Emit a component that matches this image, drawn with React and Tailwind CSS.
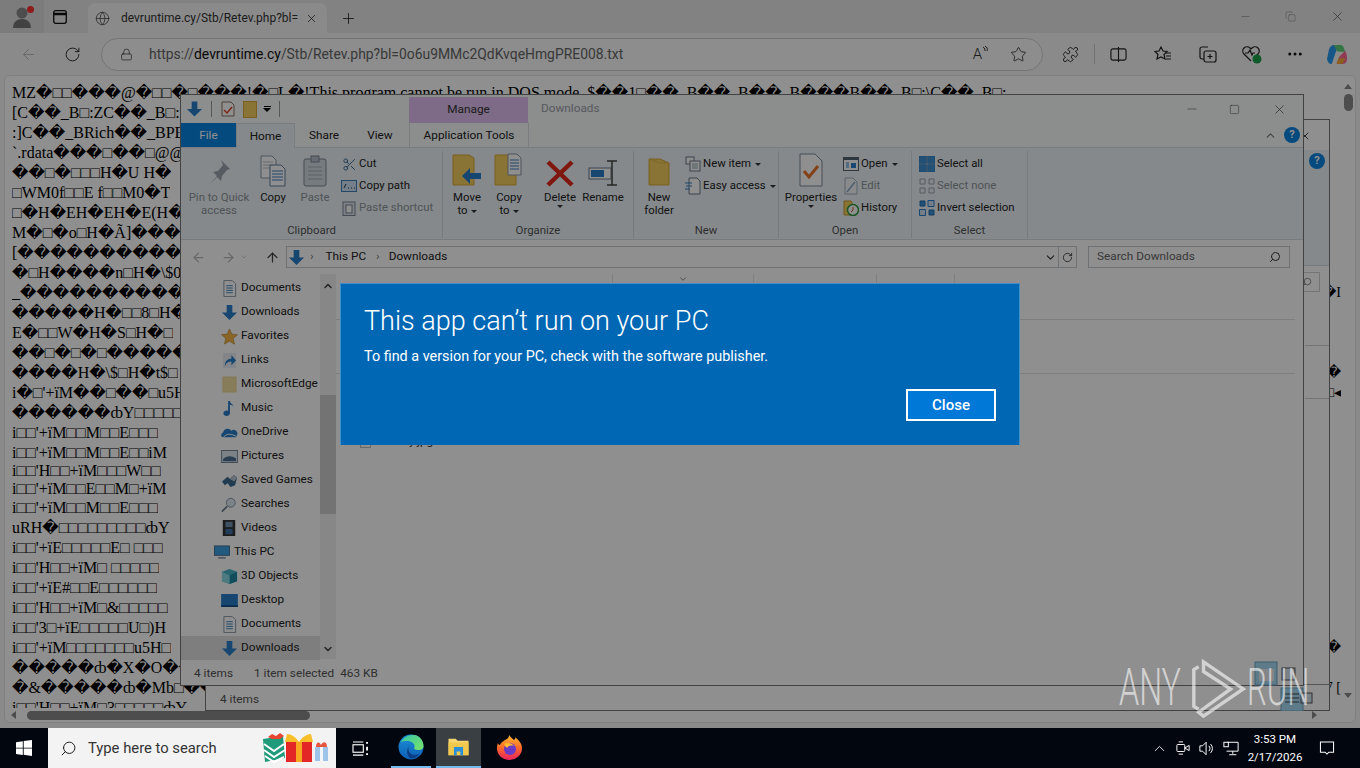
import React from "react";
import { ArrowLeft, ArrowRight, ArrowUp, RotateCw, Lock, Star, Plus, X, Globe, Minus, Square, Ellipsis, ChevronUp, ChevronDown, Search, Copy as CopyI, Puzzle, Scissors } from "lucide-react";

const UI = "font-['Roboto','Noto_Sans',sans-serif]";

const Sq = "\u25A1";
const D = "\uFFFD";
const lines = [
  [`MZ${D}${Sq}${Sq}${D}${D}${D}@${D}${Sq}${Sq}${D}${Sq}${D}${D}${D}!${D}${Sq}L${D}!This program cannot be run in DOS mode. $${D}${D}1${Sq}${D}${D}_B${D}${D}_B${D}${D}_B${D}${D}${D}B${D}${D}_B${Sq}:\\C${D}${D}_B${Sq}:`],
  [`[C${D}${D}_B${Sq}:ZC${D}${D}_B${Sq}:`],
  [`:]C${D}${D}_BRich${D}${D}_BPE`],
  [`\`.rdata${D}${D}${D}${Sq}${D}${D}${Sq}@@`],
  [`${D}${D}${Sq}${D}${Sq}${Sq}${Sq}H${D}U H${D}`],
  [`${Sq}WM0f${Sq}${Sq}E f${Sq}${Sq}M0${D}T`],
  [`${Sq}${D}H${D}EH${D}EH${D}E(H${D}`],
  [`M${D}${Sq}${D}o${Sq}H${D}Ã]${D}${D}${D}`],
  [`[${D}${D}${D}${D}${D}${D}${D}${D}${D}${D}`],
  [`${D}${Sq}H${D}${D}${D}${D}n${Sq}H${D}\\$0`],
  [`_${D}${D}${D}${D}${D}${D}${D}${D}${D}${D}${D}${D}`, `${D}I`],
  [`${D}${D}${D}${D}${D}H${D}${Sq}${Sq}8${Sq}H${D}`],
  [`E${D}${Sq}${Sq}W${D}H${D}S${Sq}H${D}${Sq}`],
  [`${D}${D}${Sq}${D}${Sq}${D}${Sq}${D}${D}${D}${D}${D}`],
  [`${D}${D}${D}${D}H${D}\\$${Sq}H${D}t$${Sq}`, `${D}`],
  [`i${D}${Sq}'+ïM${D}${D}${Sq}${D}${D}${Sq}u5H`, `${Sq}◂`],
  [`${D}${D}${D}${D}${D}${D}ȸY${Sq}${Sq}${Sq}${Sq}${Sq}`],
  [`i${Sq}${Sq}'+ïM${Sq}${Sq}M${Sq}${Sq}E${Sq}${Sq}${Sq}`],
  [`i${Sq}${Sq}'+ïM${Sq}${Sq}M${Sq}${Sq}E${Sq}${Sq}iM`, "", "h-[18px]"],
  [`i${Sq}${Sq}'H${Sq}${Sq}+ïM${Sq}${Sq}${Sq}W${Sq}${Sq}`, "", "h-[18px]"],
  [`i${Sq}${Sq}'+ïM${Sq}${Sq}E${Sq}${Sq}M${Sq}+ïM`, "", "h-[19px]"],
  [`i${Sq}${Sq}'+ïM${Sq}${Sq}M${Sq}${Sq}E${Sq}${Sq}${Sq}`],
  [`uRH${D}${Sq}${Sq}${Sq}${Sq}${Sq}${Sq}${Sq}${Sq}${Sq}ȸY`],
  [`i${Sq}${Sq}'+ïE${Sq}${Sq}${Sq}${Sq}${Sq}E${Sq} ${Sq}${Sq}${Sq}`],
  [`i${Sq}${Sq}'H${Sq}${Sq}+ïM${Sq} ${Sq}${Sq}${Sq}${Sq}${Sq}`],
  [`i${Sq}${Sq}'+ïE#${Sq}${Sq}E${Sq}${Sq}${Sq}${Sq}${Sq}${Sq}`],
  [`i${Sq}${Sq}'H${Sq}${Sq}+ïM${Sq}&${Sq}${Sq}${Sq}${Sq}${Sq}`],
  [`i${Sq}${Sq}'3${Sq}+ïE${Sq}${Sq}${Sq}${Sq}${Sq}U${Sq})H`],
  [`i${Sq}${Sq}'+ïM${Sq}${Sq}${Sq}${Sq}${Sq}${Sq}${Sq}u5H${Sq}`, `${D}`],
  [`${D}${D}${D}${D}${D}ȸ${D}X${D}O${D}${D}`],
  [`${D}&${D}${D}${D}${D}${D}ȸ${D}Mb${Sq}${D}${D}${D}`, "7 ["],
  [`i${Sq}${Sq}'H${Sq}${Sq}+ïM${Sq}3${Sq}${Sq}${Sq}${Sq}${Sq}ȸY`],
];

/* ---------- file-type icons ---------- */
const Folder = ({ className = "w-[24px] h-[30px]" }) => (
  <svg viewBox="0 0 24 30" className={className}><path d="M2 2h11l9 4v22H2z" fill="#f4cf5f" stroke="#d9a93a" /><path d="M2 2l11 4h9" fill="none" stroke="#e3b84a" /></svg>
);
const DownArrow = ({ className = "w-[18px] h-[18px]" }) => (
  <svg viewBox="0 0 18 18" className={className}><path d="M6 1h6v8h5l-8 8-8-8h5z" fill="#2a7fc9" /></svg>
);
const DocIcon = () => (
  <svg viewBox="0 0 16 18" className="w-[15px] h-[17px]"><path d="M2 .5h9l3.500 3.500v13.500h-12.500z" fill="#fff" stroke="#8a97a5" /><path d="M4.500 6h7M4.500 8.500h7M4.500 11h7M4.500 13.500h7" stroke="#3d7fbb" /></svg>
);
const Pin = () => (
  <svg viewBox="0 0 30 30" className="w-[30px] h-[30px]"><path d="M17 3l9 9-3 1-5 6-1 5-4-4-7 7 7-8-4-4 5-1 5-6z" fill="#9aa4ae" /></svg>
);
const CopyBig = () => (
  <svg viewBox="0 0 28 32" className="w-[28px] h-[32px]"><path d="M2 1h11l4 4v18H2z" fill="#fff" stroke="#8a97a5" /><path d="M4 7h10M4 10h10M4 13h10" stroke="#b6bec6" /><path d="M11 10h11l4 4v17H11z" fill="#fff" stroke="#5f7f9f" /><path d="M13 16h11M13 19h11M13 22h11M13 25h11" stroke="#3d7fbb" /></svg>
);
const PasteBig = () => (
  <svg viewBox="0 0 26 32" className="w-[26px] h-[32px]"><rect x="2" y="4" width="22" height="27" rx="2" fill="#d3dbe3" stroke="#7a8796" /><rect x="9" y="1" width="8" height="6" fill="#b7c0ca" stroke="#7a8796" /><path d="M6 12h14M6 16h14M6 20h14M6 24h14" stroke="#a4afba" /></svg>
);
const MoveTo = ({ copy }) => (
  <svg viewBox="0 0 30 34" className="w-[30px] h-[34px]">
    <path d="M1 2h16l5 3v27H1z" fill="#f4cf5f" stroke="#d9a93a" />
    {copy ? <g><path d="M14 1h9l4 4v17H14z" fill="#fff" stroke="#8a97a5" /><path d="M16 7h9M16 10h9M16 13h9M16 16h9" stroke="#3d7fbb" /></g> : <path d="M29 20v6H18v5l-8-8 8-8v5z" fill="#2a7fc9" />}
  </svg>
);
const RedX = () => (
  <svg viewBox="0 0 28 28" className="w-[28px] h-[28px]"><path d="M2 3l24 23M26 3L2 26" stroke="#e42a1c" strokeWidth="4.500" /></svg>
);
const Rename = () => (
  <svg viewBox="0 0 30 28" className="w-[30px] h-[28px]"><rect x="1" y="9" width="22" height="11" fill="#fff" stroke="#6a7a8a" /><rect x="3" y="11" width="13" height="7" fill="#2a7fc9" /><path d="M24 2v24M19 2h10M19 26h10" stroke="#444" strokeWidth="1.500" fill="none" /></svg>
);
const Props = () => (
  <svg viewBox="0 0 24 34" className="w-[24px] h-[34px]"><path d="M1 1h15l7 7v25H1z" fill="#fff" stroke="#7c8a98" /><path d="M5 18l5 6 9-11" fill="none" stroke="#e8742a" strokeWidth="3" /></svg>
);

const small = {
  scissors: <Scissors className="w-[15px] h-[15px] text-[#3d6f9b]" strokeWidth={1.6} />,
  path: <svg viewBox="0 0 16 12" className="w-[16px] h-[12px]"><rect x=".5" y=".5" width="15" height="11" fill="#cfe3f4" stroke="#3d7fbb" /><path d="M3 8l2-4M7 8h1M10 8h1M13 8h1" stroke="#234" /></svg>,
  shortcut: <svg viewBox="0 0 14 16" className="w-[14px] h-[16px]"><rect x="1" y="2" width="12" height="13.500" fill="#dfe5eb" stroke="#7a8796" /><rect x="4" y="5" width="6" height="8" fill="#fff" stroke="#7a8796" /></svg>,
  newItem: <svg viewBox="0 0 16 16" className="w-[16px] h-[16px]"><rect x="1" y="1" width="8" height="7" fill="#fff" stroke="#6b7a88" /><rect x="5" y="5" width="10" height="10" fill="#fff" stroke="#6b7a88" /><path d="M7 8h6M7 10h6M7 12h6" stroke="#8aa" /></svg>,
  easy: <svg viewBox="0 0 16 18" className="w-[16px] h-[18px]"><path d="M4 1h8l3 3v13H4z" fill="#fff" stroke="#6b7a88" /><path d="M0 6h7M1 9h6M0 12h5" stroke="#2a7fc9" /></svg>,
  open: <svg viewBox="0 0 16 14" className="w-[16px] h-[14px]"><rect x=".5" y=".5" width="15" height="13" fill="#fff" stroke="#55626f" /><path d="M1 1h14v2H1z" fill="#55626f" /><rect x="8" y="6" width="5" height="5" fill="#2a7fc9" /><path d="M3 6h3M3 8h3M3 10h3" stroke="#2a7fc9" /></svg>,
  edit: <svg viewBox="0 0 14 18" className="w-[14px] h-[18px]"><path d="M1 1h8l4 4v12H1z" fill="#f4f6f8" stroke="#9fb0c0" /><path d="M3 15L11 5" stroke="#8aa8c8" strokeWidth="1.500" /></svg>,
  history: <svg viewBox="0 0 16 16" className="w-[16px] h-[16px]"><path d="M1 1h7l1 2v12H1z" fill="#f4cf5f" stroke="#c89a2a" /><circle cx="10" cy="10" r="5.500" fill="#fff" stroke="#2f9a3f" strokeWidth="1.500" /><path d="M10 7v3l-2 2" stroke="#c2552a" fill="none" /></svg>,
  all: <svg viewBox="0 0 16 16" className="w-[16px] h-[16px]"><path d="M0 0h7.500v7.500H0zM8.500 0H16v7.500H8.500zM0 8.500h7.500V16H0zM8.500 8.500H16V16H8.500z" fill="#3f8fd0" stroke="#1f6cab" strokeWidth=".5" /></svg>,
  none: <svg viewBox="0 0 16 16" className="w-[16px] h-[16px]" fill="none" stroke="#9aa4ae"><path d="M1 1h5v5H1zM10 1h5v5h-5zM1 10h5v5H1zM10 10h5v5h-5z" /></svg>,
  invert: <svg viewBox="0 0 16 16" className="w-[16px] h-[16px]"><path d="M9 .5h6v6H9zM.5 9.500h6v6h-6z" fill="#cfe3f4" stroke="#2a7fc9" /><path d="M1 1h5v5H1zM10 10h5v5h-5z" fill="#3f8fd0" stroke="#1f6cab" /></svg>,
};

const Big = ({ w, label, icon, sub, dim, drop, className = "" }) => (
  <div className={`flex flex-col items-center ${w} ${className} shrink-0 text-center leading-[13px] whitespace-nowrap ${dim ? "text-[#8d9499]" : "text-[#222]"}`}>
    <div className="h-[38px] flex items-end justify-center pb-[2px]">{icon}</div>
    <span className="mt-[2px]">{label}</span>
    {sub && <span className="flex items-center gap-[3px]">{sub}{drop && <Tri />}</span>}
    {drop && !sub && <Tri />}
  </div>
);
const Tri = () => <span className="inline-block w-0 h-0 border-x-[3px] border-x-transparent border-t-[3px] border-t-[#333] mt-[1px]" />;
const Small = ({ icon, label, dim, drop }) => (
  <div className={`flex items-center h-[22px] whitespace-nowrap ${dim ? "text-[#8d9499]" : "text-[#222]"}`}>
    <span className="w-[18px] flex justify-center shrink-0">{icon}</span>
    <span className="ml-[1px]">{label}</span>
    {drop && <span className="ml-[4px] flex"><Tri /></span>}
  </div>
);
const Group = ({ w, label, children, pad }) => (
  <div className={`${w} shrink-0 flex flex-col border-r border-[#d5dbe0] h-[87px] mt-[3px]`}>
    <div className={`flex-1 flex items-start ${pad}`}>{children}</div>
    <div className="text-center text-[#555] h-[15px] leading-[15px]">{label}</div>
  </div>
);

const navIcon = {
  doc: <DocIcon />,
  dl: <DownArrow className="w-[17px] h-[17px]" />,
  star: <svg viewBox="0 0 18 18" className="w-[17px] h-[17px]"><path d="M9 1l2.500 5.500 6 .6-4.500 4 1.300 6L9 14l-5.300 3 1.300-6-4.500-4 6-.6z" fill="#f2b544" stroke="#b3802a" strokeWidth=".6" /></svg>,
  link: <svg viewBox="0 0 16 18" className="w-[15px] h-[17px]"><path d="M1 1h14v16H1z" fill="#e9eef3" /><path d="M3 15c0-6 3-8 7-8V3l5 6-5 5v-4c-3 0-5 1-7 5z" fill="#2a7fc9" /></svg>,
  folder: <svg viewBox="0 0 16 18" className="w-[15px] h-[17px]"><rect x="1" y="1" width="14" height="16" fill="#f3dfa0" stroke="#e8d490" /></svg>,
  music: <svg viewBox="0 0 16 18" className="w-[16px] h-[17px]"><path d="M7 1h2c0 3 4 3 4 7 0-2-2-3-4-3v9a3.500 3 0 1 1-2-2.700z" fill="#2a7fc9" /></svg>,
  cloud: <svg viewBox="0 0 18 14" className="w-[17px] h-[13px]"><path d="M1 12a3 3 0 0 1 1-5 5 5 0 0 1 9-2 4 4 0 0 1 6 5l-1 2z" fill="#2a7fc9" /><path d="M2 13c3-5 8-5 14-2" stroke="#fff" fill="none" /></svg>,
  pic: <svg viewBox="0 0 18 14" className="w-[17px] h-[13px]"><rect x=".5" y=".5" width="17" height="13" fill="#dfe8ef" stroke="#6e7f8f" /><path d="M2 10c4-4 9-4 14-1v3H2z" fill="#4a6f8f" /></svg>,
  game: <svg viewBox="0 0 18 16" className="w-[17px] h-[15px]"><path d="M1 9l6-5 2 2 5-4 3 3-2 8-5 2-3-4-3 2z" fill="#3c6a8f" /><path d="M9 6l5-4 3 3-3 4z" fill="#bcc6d0" /></svg>,
  search: <svg viewBox="0 0 18 18" className="w-[16px] h-[17px]" fill="none"><circle cx="11" cy="7" r="5" fill="#dfe8ef" stroke="#7f8f9f" /><path d="M7 11l-6 6" stroke="#6e7f8f" strokeWidth="2" /></svg>,
  video: <svg viewBox="0 0 14 18" className="w-[14px] h-[16px]"><rect width="14" height="18" fill="#333" /><rect x="3" y="2" width="8" height="6" fill="#6f93b7" /><rect x="3" y="10" width="8" height="6" fill="#3f70a7" /></svg>,
  pc: <svg viewBox="0 0 18 16" className="w-[18px] h-[15px]"><rect x="1" y="1" width="16" height="10" fill="#3c9fe2" stroke="#4a6f8f" /><path d="M5 13h8v1.500H5z" fill="#7f8f9f" /></svg>,
  obj: <svg viewBox="0 0 18 18" className="w-[17px] h-[17px]"><path d="M9 1l8 3v10l-8 3-8-3V4z" fill="#49b5c9" /><path d="M9 8l8-4v10l-8 3z" fill="#1f8aa5" /><path d="M1 4l8 4v9l-8-3z" fill="#8adbe5" /></svg>,
  desk: <svg viewBox="0 0 18 14" className="w-[17px] h-[13px]"><rect width="18" height="14" fill="#2a7fc9" /><rect y="12" width="18" height="2" fill="#17508a" /></svg>,
};
const nav = [
  ["Documents", "doc"], ["Downloads", "dl"], ["Favorites", "star"], ["Links", "link"], ["MicrosoftEdge", "folder"],
  ["Music", "music"], ["OneDrive", "cloud"], ["Pictures", "pic"], ["Saved Games", "game"], ["Searches", "search"], ["Videos", "video"],
  ["This PC", "pc", "pc"], ["3D Objects", "obj"], ["Desktop", "desk"], ["Documents", "doc"], ["Downloads", "dl", "sel"],
];

const Help = () => (
  <span className="w-[16px] h-[16px] rounded-full bg-[#0a84e0] text-white text-[11px] font-bold flex items-center justify-center">?</span>
);

const WinBehind = () => (
  <div className={`absolute left-[205px] top-[119px] w-[1125px] h-[592px] bg-white border border-[#777] flex flex-col ${UI} text-[11.800px] text-[#333]`}>
    <div className="h-[30px] flex justify-end items-center pr-[18px] pt-[2px]">
      <X className="w-[12px] h-[12px] text-[#444] absolute left-[1093px] top-[10px]" />
    </div>
    <div className="h-[116px] bg-[#eef5fa] border-b border-[#d5dbe0] flex justify-end pr-[4px] pt-[3px]">
      <Help />
    </div>
    <div className="flex-1 flex flex-col items-end relative">
      <div className="mt-[6px] mr-[9px] w-[26px] h-[20px] border border-[#cfcfcf] flex items-center justify-end pr-[7px]"><Search className="w-[10px] h-[10px] text-[#777] scale-x-[-1]" /></div>
      <div className="mt-[53px] w-[24px] border-b border-[#cfcfcf]" />
      <div className="mt-[52px] w-[24px] border-b border-[#cfcfcf]" />
    </div>
    <div className="h-[26px] border-t border-[#999] flex items-center pl-[14px] pt-[4px] text-[#555]">4 items</div>
  </div>
);

const Explorer = () => (
  <div className={`absolute left-[180px] top-[94px] w-[1124px] h-[592px] bg-white border border-[#777] flex flex-col ${UI} text-[11.800px] text-[#222]`}>
    {/* title */}
    <div className="h-[28px] flex items-end bg-[#fafbfc] shrink-0">
      <div className="flex items-center h-[28px] pl-[5px] w-[228px] shrink-0">
        <DownArrow className="w-[17px] h-[18px]" />
        <span className="w-px h-[16px] bg-[#999] ml-[8px]" />
        <svg viewBox="0 0 14 16" className="w-[14px] h-[16px] ml-[9px]"><path d="M1 1h9l3 3v11H1z" fill="#fff" stroke="#8a7060" /><path d="M3 9l3 3 5-6" stroke="#e0452a" fill="none" strokeWidth="1.500" /></svg>
        <span className="w-[14px] h-[17px] bg-[#f4cf5f] border border-[#d9a93a] ml-[8px]" />
        <span className="ml-[6px] flex flex-col items-center gap-[1px]"><span className="w-[7px] h-px bg-black" /><span className="w-0 h-0 border-x-[4px] border-x-transparent border-t-[4px] border-t-black" /></span>
        <span className="w-px h-[16px] bg-[#999] ml-[8px]" />
      </div>
      <div className="w-[119px] h-[26px] bg-[#e0bff0] flex items-center justify-center text-[#333] shrink-0">Manage</div>
      <div className="ml-[13px] h-[28px] flex items-center text-[#9aa1a8]">Downloads</div>
      <div className="ml-auto h-[28px] flex items-center">
        <Minus className="w-[14px] h-[14px] text-[#555] mr-[30px]" strokeWidth={1} />
        <Square className="w-[11px] h-[11px] text-[#333] mr-[32px]" strokeWidth={1} />
        <X className="w-[15px] h-[15px] text-[#333] mr-[16px]" strokeWidth={1} />
      </div>
    </div>
    {/* tabs */}
    <div className="h-[25px] flex items-stretch border-b border-[#dadfe3] bg-[#fafbfc] shrink-0">
      <div className="w-[55px] bg-[#0a84e0] text-white flex items-center justify-center pt-[2px]">File</div>
      <div className="w-[59px] bg-[#eef5fa] border-x border-t border-[#dadfe3] flex items-center justify-center -mb-px pt-[2px]">Home</div>
      <div className="w-[58px] flex items-center justify-center pt-[2px]">Share</div>
      <div className="w-[54px] flex items-center justify-center pt-[2px]">View</div>
      <div className="w-[2px]" />
      <div className="w-[120px] border-x border-[#dadfe3] flex items-center justify-center pt-[2px]">Application Tools</div>
      <div className="ml-auto flex items-center pr-[3px]">
        <ChevronUp className="w-[13px] h-[13px] text-[#777] mr-[7px]" />
        <Help />
      </div>
    </div>
    {/* ribbon */}
    <div className="h-[92px] bg-[#eef5fa] flex border-b border-[#d5dbe0] shrink-0 text-[11.400px]">
      <Group w="w-[262px]" label="Clipboard" pad="pl-[7px]">
        <Big w="w-[62px]" dim icon={<Pin />} label="Pin to Quick" sub="access" />
        <Big w="w-[46px]" icon={<CopyBig />} label="Copy" />
        <Big w="w-[38px]" dim icon={<PasteBig />} label="Paste" />
        <div className="ml-[6px] pt-[2px]">
          <Small icon={small.scissors} label="Cut" />
          <Small icon={small.path} label="Copy path" />
          <Small dim icon={small.shortcut} label="Paste shortcut" />
        </div>
      </Group>
      <Group w="w-[191px]" label="Organize" pad="pl-[3px]">
        <Big w="w-[42px]" icon={<MoveTo />} label="Move" sub="to" drop />
        <Big w="w-[42px]" icon={<MoveTo copy />} label="Copy" sub="to" drop />
        <Big w="w-[48px]" className="ml-[6px]" icon={<RedX />} label="Delete" drop />
        <Big w="w-[38px]" icon={<Rename />} label="Rename" />
      </Group>
      <Group w="w-[145px]" label="New" pad="pl-[5px]">
        <Big w="w-[40px]" icon={<Folder />} label="New" sub="folder" />
        <div className="pl-[5px] pt-[2px]">
          <Small icon={small.newItem} label="New item" drop />
          <Small icon={small.easy} label="Easy access" drop />
        </div>
      </Group>
      <Group w="w-[133px]" label="Open" pad="pl-[3px]">
        <Big w="w-[58px]" icon={<Props />} label="Properties" drop />
        <div className="pl-[2px] pt-[2px]">
          <Small icon={small.open} label="Open" drop />
          <Small dim icon={small.edit} label="Edit" />
          <Small icon={small.history} label="History" />
        </div>
      </Group>
      <Group w="w-[116px]" label="Select" pad="pl-[6px]">
        <div className="pt-[2px]">
          <Small icon={small.all} label="Select all" />
          <Small dim icon={small.none} label="Select none" />
          <Small icon={small.invert} label="Invert selection" />
        </div>
      </Group>
    </div>
    {/* address */}
    <div className="h-[34px] flex items-center shrink-0 pl-[10px]">
      <ArrowLeft className="w-[15px] h-[15px] text-[#bbb]" />
      <ArrowRight className="w-[15px] h-[15px] text-[#bbb] ml-[15px]" />
      <ChevronDown className="w-[8px] h-[8px] text-[#bbb] ml-[4px]" />
      <ArrowUp className="w-[15px] h-[15px] text-[#444] ml-[17px]" />
      <div className="ml-[6px] w-[773px] h-[22px] border border-[#c5cbd0] flex items-center">
        <DownArrow className="w-[17px] h-[17px] ml-[1px]" />
        <span className="ml-[5px] text-[#777]">›</span>
        <span className="ml-[12px]">This PC</span>
        <span className="ml-[10px] text-[#777]">›</span>
        <span className="ml-[9px]">Downloads</span>
        <ChevronDown className="w-[13px] h-[13px] ml-auto mr-[1px] text-[#333]" />
      </div>
      <div className="w-[18px] h-[22px] border-y border-r border-[#c5cbd0] flex items-center justify-center"><RotateCw className="w-[11px] h-[11px] text-[#444]" /></div>
      <div className="ml-[11px] w-[202px] h-[22px] border border-[#c5cbd0] flex items-center pl-[8px] text-[#666]">
        Search Downloads
        <Search className="w-[12px] h-[12px] ml-auto mr-[8px] text-[#333] scale-x-[-1]" />
      </div>
    </div>
    {/* body */}
    <div className="flex-1 flex min-h-0">
      <div className="w-[155px] shrink-0 flex">
        <div className="w-[139px] pt-[2px] flex flex-col">
          {nav.map(([t, ic, k], i) => (
            <div key={i} className={`h-[24px] flex items-center shrink-0 ${k === "sel" ? "bg-[#e0e0e0]" : ""} ${k === "pc" ? "pl-[31px]" : "pl-[38px]"}`}>
              <span className="w-[20px] flex justify-center shrink-0">{navIcon[ic]}</span>
              <span className="ml-[2px]">{t}</span>
            </div>
          ))}
        </div>
        <div className="w-[16px] bg-[#f1f1f1] flex flex-col items-center pt-[6px] pb-[4px]">
          <ChevronUp className="w-[12px] h-[12px] text-[#444]" strokeWidth={3} />
          <div className="w-full h-[119px] bg-[#cdcdcd] mt-[103px]" />
          <ChevronDown className="w-[12px] h-[12px] text-[#444] mt-auto" strokeWidth={3} />
        </div>
      </div>
      <div className="flex-1 flex flex-col pr-[8px]">
        <div className="h-[11px] flex border-b border-transparent">
          <div className="w-[277px] border-r border-[#e5e5e5]" />
          <div className="w-[141px] border-r border-[#e5e5e5] flex justify-center"><ChevronDown className="w-[10px] h-[10px] text-[#777]" /></div>
          <div className="w-[123px] border-r border-[#e5e5e5]" />
          <div className="w-[78px] border-r border-[#e5e5e5]" />
        </div>
        <div className="h-[35px] border-b border-[#e0e0e0]" />
        <div className="h-[54px] border-b border-[#e0e0e0]" />
        <div className="h-[77px] flex items-end pl-[24px] text-[#333]">
          <span className="w-[11px] h-[11px] border border-[#bbb] mb-[3px]" />
          <span className="ml-[38px]">y.jpg</span>
        </div>
      </div>
    </div>
    {/* status */}
    <div className="h-[26px] flex items-center pl-[13px] pt-[4px] text-[#555] shrink-0">
      <span>4 items</span><span className="ml-[21px]">1 item selected</span><span className="ml-[6px]">463 KB</span>
    </div>
  </div>
);

const Edge = () => (
  <svg viewBox="0 0 26 26" className="w-[26px] h-[26px]">
    <defs>
      <linearGradient id="eg1" x1="0" y1="0" x2="1" y2="1"><stop offset="0" stopColor="#33c6a5" /><stop offset="1" stopColor="#7de36b" /></linearGradient>
      <linearGradient id="eg2" x1="0" y1="0" x2="0" y2="1"><stop offset="0" stopColor="#1e8fd8" /><stop offset="1" stopColor="#0c5fb5" /></linearGradient>
    </defs>
    <circle cx="13" cy="13" r="12.500" fill="url(#eg2)" />
    <path d="M3 8C6 2 13 .5 17 1c5 1 8.500 6 8.500 11 0 3-2.500 4-5 4-3 0-4.500-1-4.500-2 1-1 1-3-1-5-3-3-9-2-12-1z" fill="url(#eg1)" />
    <path d="M11 12c-2 4 1 9 6 9 2 0 4-1 5-2-2 4-6 6-10 5 -3-2-4-8-1-12z" fill="#0e3f86" />
  </svg>
);
const Firefox = () => (
  <svg viewBox="0 0 26 26" className="w-[26px] h-[26px]">
    <defs><linearGradient id="ff" x1="0" y1="0" x2="0" y2="1"><stop offset="0" stopColor="#ffbd2e" /><stop offset=".5" stopColor="#ff6a2a" /><stop offset="1" stopColor="#e8225f" /></linearGradient></defs>
    <path d="M13 25a12 12 0 0 1-11-17c0 1 1 2 2 2 1-3 4-4 5-5 3-1 4-3 4-5 1 2 3 3 5 5 1-1 2-2 1-3 4 3 7 7 7 11a12 12 0 0 1-13 12z" fill="url(#ff)" />
    <circle cx="14" cy="14" r="6" fill="#6a3bc7" />
    <path d="M8 9c3-2 8-1 10 2-3-1-6 0-7 2-1-1-2-2-3-4z" fill="#ffbd2e" />
  </svg>
);
const Gifts = () => (
  <svg viewBox="0 0 68 30" className="w-[68px] h-[30px]">
    <path d="M1 6l20-3 2 22-20 4z" fill="#1f9a7a" />
    <path d="M2 11l10 7 10-7M2 17l10 7 11-7M3 23l9 6 10-5" stroke="#fff" strokeWidth="2" fill="none" />
    <path d="M6 4l4-3 4 2 4-3 4 3-4 3h-8z" fill="#e8452f" />
    <rect x="24" y="9" width="26" height="20" fill="#e32626" />
    <rect x="34" y="9" width="6" height="20" fill="#f7a81e" />
    <path d="M25 1c4 0 9 3 12 8 3-5 8-8 12-8l2 8H23z" fill="#f7c02a" />
    <rect x="53" y="14" width="13" height="14" fill="#9fc4ea" />
    <rect x="58" y="14" width="3" height="14" fill="#f0f6fc" />
    <path d="M54 14c0-5 3-6 5-2 2-4 6-4 6 2z" fill="#e8553f" />
  </svg>
);

const Watermark = () => (
  <div className="absolute left-[1119px] top-[656px] flex items-center text-white/60 h-[64px]">
    <span className="font-['Roboto',sans-serif] font-light text-[52px] leading-none w-[66px] scale-x-[0.62] origin-left">ANY</span>
    <svg viewBox="0 0 60 64" className="w-[60px] h-[62px] ml-[4px] -mr-[2px]" fill="none" stroke="currentColor" strokeWidth="3.500">
      <path d="M9 10L4 13v38l5 3" />
      <path d="M14 5l41 28-41 28-5-4 33-24L14 15z" />
    </svg>
    <span className="font-['Roboto',sans-serif] font-light text-[52px] leading-none w-[64px] scale-x-[0.6] origin-left">RUN</span>
  </div>
);

const Desk = () => (
  <svg viewBox="0 0 70 50" className="absolute left-[1254px] top-[661px] w-[70px] h-[50px]">
    <rect x="1" y="1" width="22" height="23" fill="#a6dcf5" stroke="#6fa6c8" />
    <rect x="5" y="8" width="15" height="12" fill="#e9eef3" />
    <rect x="28" y="7" width="13" height="12" fill="#d8e4ef" stroke="#555" />
    <rect x="27" y="27" width="22" height="23" fill="#a6dcf5" stroke="#6fa6c8" />
    <path d="M31 33h14M31 37h14M31 41h14" stroke="#444" />
    <rect x="47" y="32" width="11" height="10" fill="#d8e4ef" stroke="#555" />
  </svg>
);

export default function App() {
  return (
    <div className="w-[1360px] h-[768px] overflow-hidden flex flex-col bg-black">
      <div className="relative h-[728px] shrink-0 bg-[#f7f7f7] flex flex-col">
        {/* Edge tab strip */}
        <div className={`h-[33px] bg-[#e8e8e8] flex items-end shrink-0 ${UI} text-[12px] text-[#222]`}>
          <div className="h-full w-[44px] flex items-center justify-center relative bg-[#dedede]">
            <svg viewBox="0 0 20 24" className="w-[20px] h-[24px]"><circle cx="10" cy="8" r="5.500" fill="#8a8a8a" /><path d="M1 23c0-6 4-9 9-9s9 3 9 9z" fill="#777" /></svg>
            <span className="absolute left-[27px] top-[6px] w-[7px] h-[7px] rounded-full bg-[#ff3030]" />
          </div>
          <div className="h-full w-[44px] flex items-center justify-center -ml-[6px]">
            <svg viewBox="0 0 14 14" className="w-[14px] h-[14px]" fill="none" stroke="#111" strokeWidth="1.300"><rect x=".7" y=".7" width="12.600" height="12.600" rx="2" /><path d="M.7 4h12.600" strokeWidth="2.500" /></svg>
          </div>
          <div className="ml-[6px] w-[239px] h-[30px] bg-[#f7f7f7] rounded-t-[8px] flex items-center pl-[6px] text-[#333]">
            <Globe className="w-[15px] h-[15px] ml-[1px] text-[#444]" strokeWidth={1.2} />
            <span className="ml-[11px] w-[177px] whitespace-nowrap">devruntime.cy/Stb/Retev.php?bl=</span>
            <X className="w-[13px] h-[13px] ml-[7px] text-[#333]" strokeWidth={1.5} />
          </div>
          <div className="h-[30px] flex items-center ml-[13px]"><Plus className="w-[17px] h-[17px] text-[#222]" strokeWidth={1.2} /></div>
          <div className="ml-auto h-full flex items-center">
            <Minus className="w-[13px] h-[13px] text-[#777] mr-[33px]" strokeWidth={1} />
            <CopyI className="w-[11px] h-[11px] text-[#777] mr-[34px]" strokeWidth={1} />
            <X className="w-[15px] h-[15px] text-[#444] mr-[15px]" strokeWidth={1} />
          </div>
        </div>
        {/* toolbar */}
        <div className={`h-[42px] shrink-0 flex items-center ${UI} text-[#222]`}>
          <ArrowLeft className="w-[17px] h-[17px] ml-[20px] text-[#b5b5b5]" strokeWidth={1.3} />
          <RotateCw className="w-[17px] h-[17px] ml-[27px] text-[#222]" strokeWidth={1.3} />
          <div className="ml-[20px] w-[942px] h-[33px] rounded-full border border-[#cfcfcf] bg-[#fbfbfb] flex items-center pl-[18px]">
            <Lock className="w-[13px] h-[13px] text-[#333]" strokeWidth={1.3} />
            <span className="ml-[16px] text-[13.900px] text-[#666] whitespace-nowrap">https://<span className="text-[#111]">devruntime.cy</span>/Stb/Retev.php?bl=0o6u9MMc2QdKvqeHmgPRE008.txt</span>
            <span className="ml-auto flex items-start text-[#333]">
              <span className="text-[15px] font-light leading-[18px]">A</span>
              <svg viewBox="0 0 6 8" className="w-[6px] h-[8px] mt-[1px]" fill="none" stroke="#333"><path d="M1 1c2 1 2 3 2 4M3 0c2 1 3 3 2 5" /></svg>
            </span>
            <Star className="w-[17px] h-[17px] ml-[22px] mr-[15px] text-[#333]" strokeWidth={1.2} />
          </div>
          <Puzzle className="w-[17px] h-[17px] ml-[19px] text-[#222]" strokeWidth={1.3} />
          <span className="w-px h-[20px] bg-[#ccc] ml-[15px]" />
          <svg viewBox="0 0 18 18" className="w-[17px] h-[17px] ml-[15px]" fill="none" stroke="#222" strokeWidth="1.200"><rect x="1" y="3" width="16" height="12" rx="2" /><path d="M9 1v16" /></svg>
          <svg viewBox="0 0 18 18" className="w-[18px] h-[18px] ml-[27px]" fill="none" stroke="#222" strokeWidth="1.200"><path d="M7 2l2 4 4 .5-3 3 1 4.500-4-2-4 2 1-4.500-3-3L5 6z" /><path d="M12 8h5M12 11h5M12 14h5" /></svg>
          <svg viewBox="0 0 18 18" className="w-[18px] h-[18px] ml-[27px]" fill="none" stroke="#222" strokeWidth="1.200"><path d="M5 14H3a2 2 0 0 1-2-2V4a2 2 0 0 1 2-2h6" /><rect x="5" y="6" width="12" height="11" rx="2" /><path d="M11 9v5M8.500 11.500h5" /></svg>
          <svg viewBox="0 0 20 20" className="w-[20px] h-[20px] ml-[25px]" fill="none" stroke="#222" strokeWidth="1.200"><path d="M9 17L2 10a4 4 0 0 1 6-6l1 1 1-1a4 4 0 0 1 6 6l-2 2" /><path d="M3 9h3l2-3 2 5 1-2h2" /><circle cx="15" cy="15" r="4.500" fill="#1aa04a" stroke="none" /></svg>
          <Ellipsis className="w-[18px] h-[18px] ml-[24px] text-[#111]" strokeWidth={2} />
          <svg viewBox="0 0 24 24" className="w-[23px] h-[23px] ml-[22px]">
            <path d="M8 2h5l-4 11-3 9c-3 0-4-2-5-5L3 7c1-3 3-5 5-5z" fill="#2a9bf0" />
            <path d="M8 2h7c2 0 3 1 4 4l1 3h-8z" fill="#5fcf7a" />
            <path d="M20 8c3 6 3 14-3 14h-6l3-8z" fill="#ff6a9a" />
            <path d="M11 22l2-6h7c-1 4-3 6-5 6z" fill="#f5a83a" />
            <path d="M10.500 9h4.500l-1.500 6H9z" fill="#f7f7f7" />
          </svg>
        </div>
        {/* page */}
        <div className="flex-1 min-h-0 mx-[4px] mb-[5px] bg-white rounded-[6px] border border-[#e3e3e3] flex relative">
          <div className="flex-1 min-w-0 flex flex-col relative">
            <div className="flex-1 min-h-0 overflow-hidden pl-[7px] pt-[7px] font-['Liberation_Serif','DejaVu_Sans',serif] text-[16px] text-black">
              {lines.map(([l, r, h], i) => (
                <div key={i} className={`${h || "h-[20px]"} leading-[20px] flex justify-between whitespace-nowrap`}>
                  <span className="min-w-0 overflow-hidden">{l}</span>
                  {r && <span className="shrink-0 text-[14px]">{r}</span>}
                </div>
              ))}
            </div>
            <div className="h-[14px] shrink-0 flex items-center pl-[6px] pr-[24px]">
              <span className="w-0 h-0 border-y-[4px] border-y-transparent border-r-[5px] border-r-[#888]" />
              <span className="ml-[11px] w-[283px] h-[9px] rounded-full bg-[#8a8a8a]" />
              <span className="ml-auto w-0 h-0 border-y-[4px] border-y-transparent border-l-[5px] border-l-[#888]" />
            </div>
          </div>
          <div className="w-[14px] shrink-0 flex flex-col items-center pt-[8px] pb-[24px]">
            <span className="w-0 h-0 border-x-[4px] border-x-transparent border-b-[5px] border-b-[#888]" />
            <span className="mt-[5px] w-[9px] h-[17px] rounded-full bg-[#8a8a8a]" />
            <span className="mt-auto w-0 h-0 border-x-[4px] border-x-transparent border-t-[5px] border-t-[#888]" />
          </div>
        </div>
        <WinBehind />
        <Explorer />
        <Desk />
        {/* dim layer */}
        <div className="absolute inset-0 bg-black/[0.44]" />
        <Watermark />
        {/* dialog */}
        <div className={`absolute left-[340px] top-[283px] w-[680px] h-[162px] bg-[#0067b5] border-t border-x border-[#3f8fc9] text-white flex flex-col px-[23px] ${UI}`}>
          <div className="mt-[17px] text-[27px] leading-[40px] font-light">This app can’t run on your PC</div>
          <div className="mt-[6px] text-[14.400px] leading-[20px]">To find a version for your PC, check with the software publisher.</div>
          <div className="mt-auto mb-[24px] self-end w-[90px] h-[32px] bg-[#0078d7] border-2 border-white flex items-center justify-center text-[15px] font-medium">Close</div>
        </div>
      </div>
      {/* taskbar */}
      <div className={`h-[40px] shrink-0 bg-[#02060f] flex items-stretch ${UI} text-white`}>
        <div className="w-[48px] flex items-center justify-center">
          <svg viewBox="0 0 16 16" className="w-[16px] h-[16px]" fill="#fff"><path d="M0 2.200l6.800-1v6.500H0zM7.700 1.100L16 0v7.700H7.700zM0 8.500h6.800v6.400l-6.800-1zM7.700 8.500H16V16l-8.300-1.200z" /></svg>
        </div>
        <div className="w-[288px] bg-[#f3f3f3] flex items-center text-[#222] pl-[12px]">
          <Search className="w-[17px] h-[17px] scale-x-[-1] text-[#111]" strokeWidth={1.3} />
          <span className="ml-[11px] text-[14.800px] text-[#333]">Type here to search</span>
          <span className="ml-auto mr-[6px] flex"><Gifts /></span>
        </div>
        <div className="w-[48px] flex items-center justify-center">
          <svg viewBox="0 0 18 16" className="w-[17px] h-[15px]" fill="none" stroke="#fff" strokeWidth="1.200"><path d="M1 1h11M1 15h11" /><rect x="1" y="4" width="11" height="8" /><path d="M16 1v2M16 6v4M16 13v2" strokeWidth="2" /></svg>
        </div>
        <div className="w-[40px] ml-[7px] flex items-center justify-center border-b-2 border-[#76b9ed]"><Edge /></div>
        <div className="w-[45px] ml-[5px] bg-[#3a3f44] flex items-center justify-center border-b-2 border-[#76b9ed]">
          <svg viewBox="0 0 24 22" className="w-[23px] h-[20px]"><path d="M1 2h8l2 2h12v16H1z" fill="#f7d774" /><rect x="1" y="6" width="22" height="14" fill="#f2c94c" /><path d="M7 11h10v9h-3v-4h-4v4H7z" fill="#2a8fd8" /></svg>
        </div>
        <div className="w-[56px] flex items-center justify-center"><Firefox /></div>
        <div className="ml-auto flex items-center">
          <ChevronUp className="w-[17px] h-[17px] mr-[8px]" strokeWidth={1.2} />
          <svg viewBox="0 0 16 18" className="w-[14px] h-[16px] mr-[9px]" fill="none" stroke="#fff" strokeWidth="1.100"><rect x="1" y="5" width="9" height="8" rx="1" /><path d="M10 9l5-3v6zM3 2h5M3 16h5" /></svg>
          <svg viewBox="0 0 18 16" className="w-[16px] h-[15px] mr-[8px]" fill="none" stroke="#fff" strokeWidth="1.100"><path d="M1 5h3l4-4v14l-4-4H1zM11 5a4 4 0 0 1 0 6M13 3a7 7 0 0 1 0 10" /></svg>
          <svg viewBox="0 0 18 16" className="w-[16px] h-[15px] mr-[1px]" fill="none" stroke="#fff" strokeWidth="1.100"><path d="M5 1h12v10H4M11 11v3M7 15h8" /><rect x="1" y="1" width="5" height="5" /></svg>
          <div className="w-[70px] flex flex-col items-center text-[11.500px] leading-[18px]"><span>3:53 PM</span><span>2/17/2026</span></div>
          <svg viewBox="0 0 16 16" className="w-[16px] h-[15px] ml-[9px] mr-[25px]" fill="none" stroke="#fff" strokeWidth="1.100"><path d="M1 1h14v11H10l-2 2-2-2H1z" /></svg>
        </div>
      </div>
    </div>
  );
}
